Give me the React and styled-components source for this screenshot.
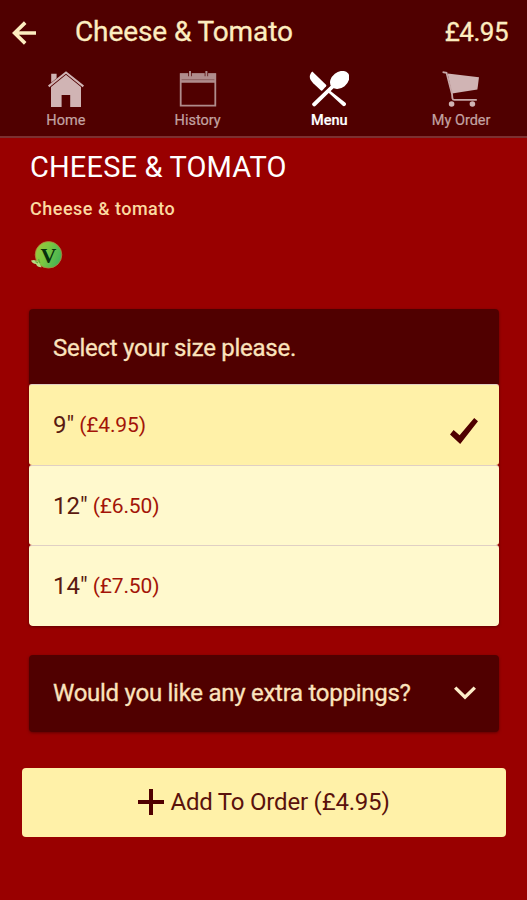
import React from "react";
import styled, { createGlobalStyle } from "styled-components";

const GlobalStyle = createGlobalStyle`
  * {
    box-sizing: border-box;
  }

  body {
    margin: 0;
    background: #990000;
    font-family: Roboto, "Liberation Sans", sans-serif;
  }

  h1, h2, p {
    margin: 0;
    font-weight: 400;
  }

  button {
    border: 0;
    font-family: inherit;
    cursor: pointer;
  }
`;

const sizes = [
  { label: '9"', price: "£4.95", selected: true, height: 81 },
  { label: '12"', price: "£6.50", height: 80 },
  { label: '14"', price: "£7.50", height: 81 },
];

function BackIcon() {
  return (
    <svg width="24" height="24" viewBox="0 0 24 24" fill="none" stroke="#fdedc0" strokeWidth="3.6">
      <path d="M24 12H2.5M13.2 1.6 2.6 12l10.6 10.4" />
    </svg>
  );
}

function HomeIcon() {
  return (
    <svg width="36" height="36" viewBox="0 0 36 36" fill="#d0b4b4">
      <path d="M3.2 2.8h5.4v4.4l-5.4 4.6z" />
      <path d="M18 .2 36 14.6l-1.3 1.6L18 2.7 1.3 16.2 0 14.6z" />
      <path d="M18 3.8 33 15.9V36H22.2V24h-8.600v12H3V15.900z" />
    </svg>
  );
}

function CalendarIcon() {
  return (
    <svg width="38" height="36" viewBox="0 0 38 36">
      <path d="M1.700 3.200h34.600v31.400H1.700z" fill="none" stroke="#b08c8c" strokeWidth="1.800" />
      <path d="M1 2.400h36v9.400H1z" fill="#b08c8c" />
      <path d="M2.600 8.700h32.800" stroke="#8d6060" strokeWidth="1" />
      <path d="M11 0v5.200M27.400 0v5.200" stroke="#500000" strokeWidth="3.400" />
      <path d="M11 0v6M27.400 0v6" stroke="#b08c8c" strokeWidth="2" />
    </svg>
  );
}

function CutleryIcon() {
  return (
    <svg width="40" height="36" viewBox="0 0 40 36" fill="#fff">
      <path d="M3.300.600 17 13.800c.500.500.500 1 .100 1.500l-3.600 4c-.500.500-1 .500-1.500.100L4.200 12.200C.5 8.700-.8 4.800 3.300.6z" />
      <path d="M19.600 18.400 36.200 31.600a2 2 0 0 1 .2 2.900 2 2 0 0 1-2.900.1L18 20.300z" />
      <path d="M25.300 16.600 6.700 34.800a2 2 0 0 1-3-.2 2 2 0 0 1 .3-2.900L22.500 14z" />
      <ellipse cx="30.700" cy="8.900" rx="10.600" ry="7.900" transform="rotate(-38 30.700 8.900)" />
    </svg>
  );
}

function CartIcon() {
  return (
    <svg width="38" height="36" viewBox="0 0 38 36">
      <path d="M5.600 2.600 37 6.200l-1.600 12.400L10 22.600z" fill="#d0b4b4" />
      <path
        d="M.6 1.200 4.500 1.800 10 23l.4 4.200q.4 1.600 2 1.600h22.400"
        fill="none"
        stroke="#c7a8a8"
        strokeWidth="1.800"
      />
      <circle cx="9.600" cy="33" r="2.800" fill="#d0b4b4" />
      <circle cx="30.400" cy="33" r="2.800" fill="#d0b4b4" />
    </svg>
  );
}

function CheckIcon() {
  return (
    <svg width="28" height="26" viewBox="0 0 28 26" fill="#500000">
      <path d="M24.200 0 28 3.200 10.200 26 0 16.500 3.600 12 9.600 17.300z" />
    </svg>
  );
}

function ChevronIcon() {
  return (
    <svg width="22" height="14" viewBox="0 0 22 14" fill="none" stroke="#fdedc9" strokeWidth="3.400">
      <path d="M1.200 1.600 11 11.100l9.800-9.500" />
    </svg>
  );
}

function PlusIcon() {
  return (
    <svg width="26" height="26" viewBox="0 0 26 26" stroke="#500000" strokeWidth="4">
      <path d="M13 0v26M0 13h26" />
    </svg>
  );
}

function VegetarianIcon() {
  return (
    <svg width="32" height="28" viewBox="0 0 32 28">
      <defs>
        <linearGradient id="leaf" x1="0" y1="0" x2="1" y2="0.400">
          <stop offset="0" stopColor="#a4c83c" />
          <stop offset="0.500" stopColor="#7cc840" />
          <stop offset="1" stopColor="#48b454" />
        </linearGradient>
      </defs>
      <circle cx="17.500" cy="13.800" r="13.300" fill="url(#leaf)" stroke="#b4823c" strokeWidth="0.800" />
      <path d="M0 19.400q5-1.600 8 2.200l2.600 4.600q-4.200.3-5.600-3.200Q1.400 22.600 0 19.400z" fill="#b5dc82" />
      <path d="m4.500 20.500 2.600 1.500M7.500 18l1.400 4" stroke="#62a83c" strokeWidth="1.200" />
      <VegLetter x="17.500" y="21.500" textAnchor="middle">V</VegLetter>
    </svg>
  );
}

function NavItem({ icon, label, active }) {
  return (
    <NavLink $active={active}>
      {icon}
      <span>{label}</span>
    </NavLink>
  );
}

function App() {
  return (
    <Screen>
      <GlobalStyle />
      <Header>
        <TitleBar>
          <BackIcon />
          <Title>Cheese &amp; Tomato</Title>
          <Total>£4.95</Total>
        </TitleBar>
        <Nav>
          <NavItem icon={<HomeIcon />} label="Home" />
          <NavItem icon={<CalendarIcon />} label="History" />
          <NavItem icon={<CutleryIcon />} label="Menu" active />
          <NavItem icon={<CartIcon />} label="My Order" />
        </Nav>
      </Header>
      <Content>
        <ProductName>CHEESE &amp; TOMATO</ProductName>
        <Description>Cheese &amp; tomato</Description>
        <VegetarianIcon />
        <SizePanel>
          <PanelHeader>
            <SelectLabel>Select your size please.</SelectLabel>
          </PanelHeader>
          {sizes.map((size) => (
            <SizeRow key={size.label} $selected={size.selected} $height={size.height}>
              <SizeLabel>{size.label}</SizeLabel>
              <SizePrice>({size.price})</SizePrice>
              {size.selected && <CheckIcon />}
            </SizeRow>
          ))}
        </SizePanel>
        <ToppingsPanel>
          <ToppingsLabel>Would you like any extra toppings?</ToppingsLabel>
          <ChevronIcon />
        </ToppingsPanel>
      </Content>
      <AddButton>
        <PlusIcon />
        <AddLabel>Add To Order (£4.95)</AddLabel>
      </AddButton>
    </Screen>
  );
}

const Screen = styled.div`
  display: flex;
  flex-direction: column;
  width: 527px;
  height: 900px;
  overflow: hidden;
  background: #990000;
`;

const Header = styled.header`
  height: 138px;
  background: #500000;
  border-bottom: 2px solid #7c3030;
`;

const TitleBar = styled.div`
  display: flex;
  align-items: center;
  height: 66px;
  padding: 0 19px 0 12px;
  color: #fdedc0;
`;

const Title = styled.h1`
  flex: 1;
  margin: -2px 0 0 39px;
  font-size: 28px;
  line-height: 34px;
  letter-spacing: -0.1px;
  white-space: nowrap;
  -webkit-text-stroke: 0.3px;
`;

const Total = styled.div`
  margin-top: -2px;
  font-size: 26px;
  line-height: 32px;
  letter-spacing: -0.5px;
  -webkit-text-stroke: 0.3px;
`;

const Nav = styled.nav`
  display: grid;
  grid-template-columns: repeat(4, 1fr);
  padding-top: 5px;
`;

const NavLink = styled.div`
  display: flex;
  flex-direction: column;
  align-items: center;
  gap: 4px;
  color: ${({ $active }) => ($active ? "#fff" : "#c3a3a3")};
  font-size: 14.5px;
  font-weight: ${({ $active }) => ($active ? 500 : 400)};
  line-height: 20px;
  -webkit-text-stroke: 0.2px;
`;

const Content = styled.main`
  padding: 12px 28px 0 29px;

  > svg {
    display: block;
    margin: 21px 0 0 2px;
  }
`;

const ProductName = styled.h2`
  margin-left: 1px;
  color: #fff;
  font-size: 29px;
  line-height: 34px;
  letter-spacing: 0.15px;
  white-space: nowrap;
`;

const Description = styled.p`
  margin: 14px 0 0 1px;
  color: #fbd9a0;
  font-size: 18px;
  font-weight: 500;
  line-height: 22px;
  letter-spacing: 0.5px;
`;

const VegLetter = styled.text`
  fill: #06300c;
  font: bold 22px "Liberation Serif", serif;
`;

const SizePanel = styled.section`
  margin-top: 40px;
  border-radius: 4px;
  overflow: hidden;
  box-shadow: 0 1px 3px rgba(60, 0, 0, 0.6);
`;

const PanelHeader = styled.div`
  display: flex;
  align-items: center;
  height: 75px;
  padding: 0 24px;
  background: #500000;
  color: #fbe3bd;
  font-size: 24px;
  -webkit-text-stroke: 0.3px;
`;

const SelectLabel = styled.div`
  padding-top: 2px;
  line-height: 30px;
  letter-spacing: -0.26px;
`;

const SizeRow = styled.div`
  display: flex;
  align-items: center;
  height: ${({ $height }) => $height}px;
  padding: 0 21px 0 24px;
  border-top: 1px solid #e0d0c4;
  border-radius: 3px;
  background: ${({ $selected }) => ($selected ? "#fff1a8" : "#fff9cd")};

  svg {
    margin: 11px 0 0 auto;
  }
`;

const SizeLabel = styled.span`
  color: #5a1a10;
  font-size: 24px;
`;

const SizePrice = styled.span`
  margin-left: 5px;
  color: #a31408;
  font-size: 21px;
  letter-spacing: -0.15px;
`;

const ToppingsPanel = styled(PanelHeader)`
  justify-content: space-between;
  height: 77px;
  margin-top: 29px;
  border-radius: 4px;
  box-shadow: 0 1px 3px rgba(60, 0, 0, 0.6);

  svg {
    position: relative;
    left: 1px;
    top: -1px;
  }
`;

const ToppingsLabel = styled.div`
  padding-bottom: 2px;
  line-height: 30px;
  letter-spacing: -0.27px;
  white-space: nowrap;
`;

const AddButton = styled.button`
  display: flex;
  align-items: center;
  justify-content: center;
  gap: 6px;
  height: 69px;
  margin: 36px 21px 0 22px;
  padding: 0 0 2px;
  border-radius: 4px;
  background: #fff1a8;
  color: #5a120c;
  font-size: 24px;
`;

const AddLabel = styled.span`
  letter-spacing: -0.2px;
`;

export default App;
